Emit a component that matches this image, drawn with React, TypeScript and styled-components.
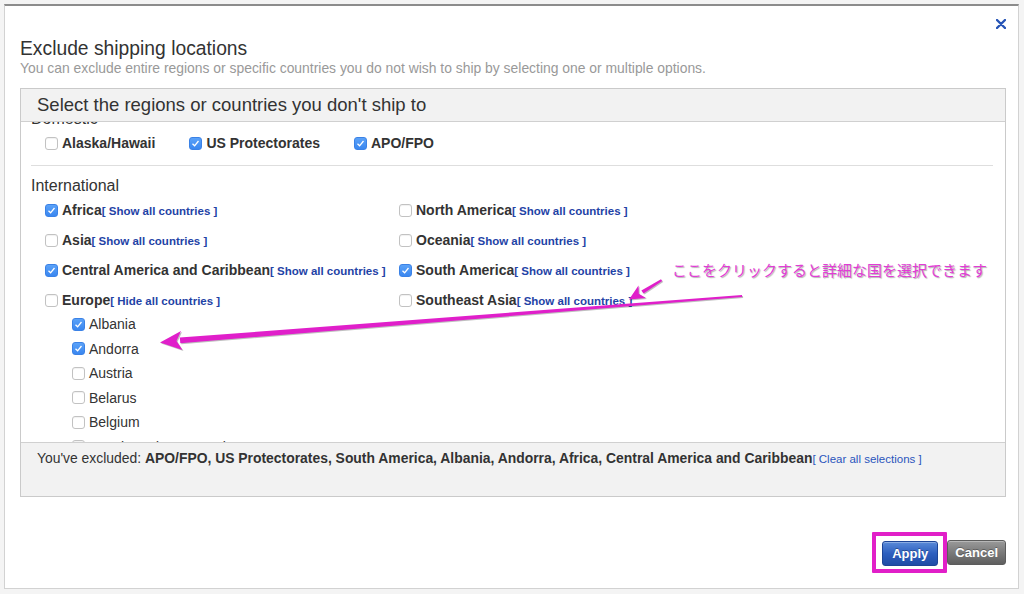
import { useLayoutEffect, useRef } from "react";
import styled, { createGlobalStyle } from "styled-components";

const GlobalStyle = createGlobalStyle`
  html, body {
    margin: 0;
    padding: 0;
  }
  body {
    background: #f4f4f4;
    font-family: "Liberation Sans", Arial, sans-serif;
    color: #333;
  }
`;

const Backdrop = styled.div`
  position: relative;
  width: 1024px;
  height: 594px;
  box-sizing: border-box;
  padding: 4px 5px 5px 4px;
  overflow: hidden;
`;

const Modal = styled.div`
  box-sizing: border-box;
  height: 100%;
  background: #fff;
  border: 1px solid #d2d2d2;
  border-top: 2px solid #8c8c8c;
  padding: 13px 12px 0 15px;
  display: flex;
  flex-direction: column;
`;

const CloseRow = styled.div`
  display: flex;
  justify-content: flex-end;
  height: 10px;
`;

const CloseButton = styled.button`
  width: 10px;
  height: 10px;
  padding: 0;
  border: 0;
  background: none;
  display: flex;
  cursor: pointer;
`;

const Title = styled.h2`
  margin: 9px 0 0;
  font-size: 19.3px;
  line-height: 22px;
  font-weight: normal;
  color: #333;
`;

const Subtitle = styled.p`
  margin: 0;
  font-size: 13.9px;
  line-height: 16px;
  color: #999;
`;

const Panel = styled.div`
  margin-top: 12px;
  border: 1px solid #cacaca;
  display: flex;
  flex-direction: column;
`;

const PanelHeader = styled.div`
  height: 32px;
  line-height: 31px;
  padding: 0 16px;
  font-size: 18.5px;
  background: #f2f2f2;
  border-bottom: 1px solid #d0d0d0;
`;

const ScrollArea = styled.div`
  height: 320px;
  overflow-y: auto;
  scrollbar-width: none;
  &::-webkit-scrollbar {
    display: none;
  }
`;

const ScrollContent = styled.div`
  padding: 10px 12px 10px 10px;
`;

const SectionTitle = styled.div<{ $top?: number }>`
  margin: ${(p) => p.$top ?? 0}px 0 3px;
  font-size: 16px;
  line-height: 18px;
`;

const DomesticRow = styled.div`
  display: flex;
  gap: 34px;
  padding-left: 14px;
`;

const Divider = styled.div`
  height: 1px;
  margin-top: 10px;
  background: #dedede;
`;

const RegionGrid = styled.div`
  display: grid;
  grid-template-columns: 354px 1fr;
  row-gap: 6px;
  align-items: start;
  padding-left: 14px;
`;

const RegionCell = styled.div`
  display: flex;
  flex-direction: column;
`;

const CountryList = styled.div`
  display: flex;
  flex-direction: column;
  padding-left: 27px;
`;

const Option = styled.label<{ $sub?: boolean }>`
  display: flex;
  align-items: center;
  gap: 4px;
  height: ${(p) => (p.$sub ? "24.5px" : "24px")};
  font-size: 14px;
  font-weight: ${(p) => (p.$sub ? "normal" : "bold")};
  color: #333;
  white-space: nowrap;
  cursor: pointer;
`;

const Box = styled.span<{ $checked?: boolean }>`
  flex: none;
  box-sizing: border-box;
  width: 13px;
  height: 13px;
  border-radius: 3px;
  display: flex;
  align-items: center;
  justify-content: center;
  background: ${(p) => (p.$checked ? "linear-gradient(#5ba2f8, #3a87f0)" : "#fff")};
  border: 1px solid ${(p) => (p.$checked ? "#3b82e6" : "#c2c2c2")};
  box-shadow: ${(p) => (p.$checked ? "none" : "inset 0 1px 1px rgba(0,0,0,0.06)")};
`;

const ToggleLink = styled.a`
  font-size: 11.5px;
  font-weight: bold;
  color: #1f43a6;
  text-decoration: none;
  cursor: pointer;
`;

const Footer = styled.div`
  box-sizing: border-box;
  height: 54px;
  padding: 7px 16px;
  background: #f2f2f2;
  border-top: 1px solid #d0d0d0;
  font-size: 13.9px;
  line-height: 16px;
  color: #333;
  white-space: nowrap;
`;

const ClearLink = styled.a`
  font-size: 11.5px;
  color: #2a55bd;
  text-decoration: none;
  cursor: pointer;
`;

const ButtonRow = styled.div`
  margin-top: 35px;
  display: flex;
  justify-content: flex-end;
  align-items: center;
`;

const Highlight = styled.span`
  display: flex;
  padding: 5px 5px 3px 6px;
  border: 4px solid #e11fc8;
  border-radius: 1px;
`;

const Button = styled.button<{ $primary?: boolean }>`
  height: 25px;
  padding: ${(p) => (p.$primary ? "0 9px" : "0 7px")};
  border-radius: 3px;
  font-family: "Liberation Sans", Arial, sans-serif;
  font-size: 13px;
  font-weight: bold;
  color: #fff;
  text-shadow: 0 -1px 0 rgba(0, 0, 0, 0.3);
  cursor: pointer;
  border: 1px solid ${(p) => (p.$primary ? "#1d4597" : "#5c5c5c")};
  background: ${(p) =>
    p.$primary
      ? "linear-gradient(#5a8ad8, #2d5fbf 50%, #1f4ca6)"
      : "linear-gradient(#9a9a9a, #7a7a7a 50%, #5f5f5f)"};
  box-shadow: inset 0 1px 0 rgba(255, 255, 255, 0.3);
`;

const Overlay = styled.svg`
  position: absolute;
  left: 0;
  top: 0;
  pointer-events: none;
  filter: drop-shadow(1px 1px 0.5px rgba(0, 0, 0, 0.25));
`;

const Note = styled.span`
  position: absolute;
  left: 672px;
  top: 260px;
  font-family: "Noto Sans CJK JP", sans-serif;
  font-size: 15px;
  line-height: 20px;
  color: #e23cd6;
  text-shadow: 1px 1px 1px rgba(0, 0, 0, 0.3);
  white-space: nowrap;
`;

function CheckBox({ checked }: { checked?: boolean }) {
  return (
    <Box $checked={checked}>
      {checked && (
        <svg width="9" height="9" viewBox="0 0 9 9">
          <polyline points="1.5,4.8 3.6,6.8 7.5,2" fill="none" stroke="#fff" strokeWidth="1.3" />
        </svg>
      )}
    </Box>
  );
}

interface Region {
  name: string;
  checked?: boolean;
  open?: boolean;
}

const leftRegions: Region[] = [
  { name: "Africa", checked: true },
  { name: "Asia" },
  { name: "Central America and Caribbean", checked: true },
  { name: "Europe", open: true },
];

const rightRegions: Region[] = [
  { name: "North America" },
  { name: "Oceania" },
  { name: "South America", checked: true },
  { name: "Southeast Asia" },
];

const europe = [
  { name: "Albania", checked: true },
  { name: "Andorra", checked: true },
  { name: "Austria" },
  { name: "Belarus" },
  { name: "Belgium" },
  { name: "Bosnia and Herzegovina" },
  { name: "Bulgaria" },
  { name: "Croatia, Republic of" },
];

function RegionOption({ region }: { region: Region }) {
  return (
    <Option>
      <CheckBox checked={region.checked} />
      <span>
        {region.name}
        <ToggleLink>{region.open ? "[ Hide all countries ]" : "[ Show all countries ]"}</ToggleLink>
      </span>
    </Option>
  );
}

function App() {
  const scrollRef = useRef<HTMLDivElement>(null);

  // the list in the screenshot is scrolled a little, cutting "Domestic"
  useLayoutEffect(() => {
    if (scrollRef.current) scrollRef.current.scrollTop = 22;
  }, []);

  const cells: Region[] = [];
  leftRegions.forEach((r, i) => cells.push(r, rightRegions[i]));

  return (
    <Backdrop>
      <GlobalStyle />
      <Modal>
        <CloseRow>
          <CloseButton aria-label="Close">
            <svg width="10" height="10" viewBox="0 0 10 10">
              <path d="M1 1L9 9M9 1L1 9" stroke="#2654b6" strokeWidth="2.4" strokeLinecap="round" />
            </svg>
          </CloseButton>
        </CloseRow>
        <Title>Exclude shipping locations</Title>
        <Subtitle>
          You can exclude entire regions or specific countries you do not wish to ship by selecting one or multiple
          options.
        </Subtitle>

        <Panel>
          <PanelHeader>Select the regions or countries you don't ship to</PanelHeader>
          <ScrollArea ref={scrollRef}>
            <ScrollContent>
              <SectionTitle>Domestic</SectionTitle>
              <DomesticRow>
                <Option>
                  <CheckBox />
                  Alaska/Hawaii
                </Option>
                <Option>
                  <CheckBox checked />
                  US Protectorates
                </Option>
                <Option>
                  <CheckBox checked />
                  APO/FPO
                </Option>
              </DomesticRow>
              <Divider />
              <SectionTitle $top={11}>International</SectionTitle>
              <RegionGrid>
                {cells.map((r) => (
                  <RegionCell key={r.name}>
                    <RegionOption region={r} />
                    {r.open && (
                      <CountryList>
                        {europe.map((c) => (
                          <Option $sub key={c.name}>
                            <CheckBox checked={c.checked} />
                            {c.name}
                          </Option>
                        ))}
                      </CountryList>
                    )}
                  </RegionCell>
                ))}
              </RegionGrid>
            </ScrollContent>
          </ScrollArea>
          <Footer>
            You've excluded:{" "}
            <b>APO/FPO, US Protectorates, South America, Albania, Andorra, Africa, Central America and Caribbean</b>
            <ClearLink>[ Clear all selections ]</ClearLink>
          </Footer>
        </Panel>

        <ButtonRow>
          <Highlight>
            <Button $primary>Apply</Button>
          </Highlight>
          <Button>Cancel</Button>
        </ButtonRow>
      </Modal>

      <Overlay width="1024" height="594" viewBox="0 0 1024 594">
        <g fill="#e01fca">
          <polygon points="742.1,297 742,295 179.8,337.6 180.3,343.2" />
          <polygon points="160,342.5 181,331 176.5,341 182.5,350" />
          <polygon points="661,279.2 662.2,281 643.5,293.6 641.4,290.6" />
          <polygon points="629,299.5 638.5,285.5 638.8,293.8 646,298" />
        </g>
      </Overlay>
      <Note>ここをクリックすると詳細な国を選択できます</Note>
    </Backdrop>
  );
}

export default App;
